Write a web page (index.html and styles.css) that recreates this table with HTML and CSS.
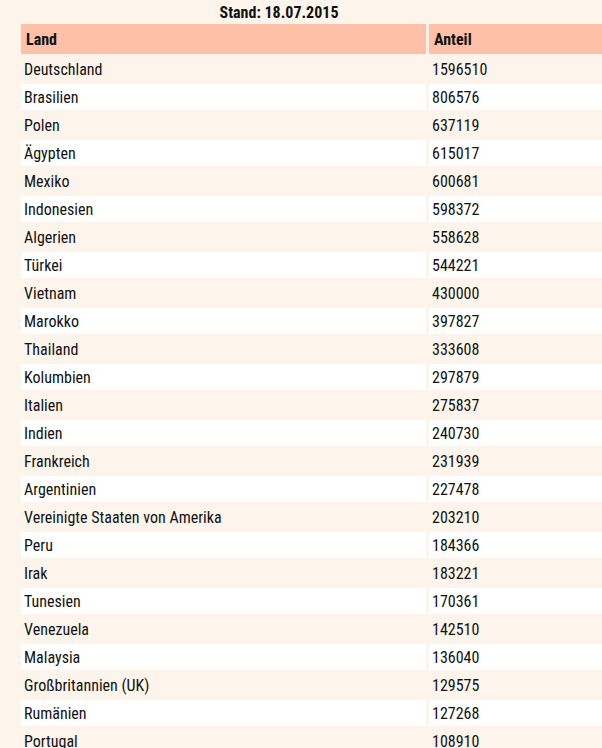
FILE: index.html
```html
<!DOCTYPE html>
<html lang="de">
<head>
<meta charset="utf-8">
<title>Anteil</title>
<link rel="stylesheet" href="styles.css">
</head>
<body>
<div class="stand">Stand: 18.07.2015</div>
<table class="tbl">
<thead>
<tr><th class="c1">Land</th><th>Anteil</th></tr>
</thead>
<tbody>
<tr><td>Deutschland</td><td>1596510</td></tr>
<tr><td>Brasilien</td><td>806576</td></tr>
<tr><td>Polen</td><td>637119</td></tr>
<tr><td>Ägypten</td><td>615017</td></tr>
<tr><td>Mexiko</td><td>600681</td></tr>
<tr><td>Indonesien</td><td>598372</td></tr>
<tr><td>Algerien</td><td>558628</td></tr>
<tr><td>Türkei</td><td>544221</td></tr>
<tr><td>Vietnam</td><td>430000</td></tr>
<tr><td>Marokko</td><td>397827</td></tr>
<tr><td>Thailand</td><td>333608</td></tr>
<tr><td>Kolumbien</td><td>297879</td></tr>
<tr><td>Italien</td><td>275837</td></tr>
<tr><td>Indien</td><td>240730</td></tr>
<tr><td>Frankreich</td><td>231939</td></tr>
<tr><td>Argentinien</td><td>227478</td></tr>
<tr><td>Vereinigte Staaten von Amerika</td><td>203210</td></tr>
<tr><td>Peru</td><td>184366</td></tr>
<tr><td>Irak</td><td>183221</td></tr>
<tr><td>Tunesien</td><td>170361</td></tr>
<tr><td>Venezuela</td><td>142510</td></tr>
<tr><td>Malaysia</td><td>136040</td></tr>
<tr><td>Großbritannien (UK)</td><td>129575</td></tr>
<tr><td>Rumänien</td><td>127268</td></tr>
<tr><td>Portugal</td><td>108910</td></tr>
</tbody>
</table>
</body>
</html>
```
FILE: styles.css
```css
html {
  overflow: hidden;
  background: #fdf5ec;
}
body {
  margin: 0;
  padding: 4px 0 0 18px;
  font-family: "Roboto Condensed", Roboto, "Liberation Sans", sans-serif;
  font-stretch: condensed;
  color: #111;
  font-size: 16px;
}
.stand {
  width: 522px;
  text-align: center;
  font-weight: bold;
  font-size: 16px;
  line-height: 18px;
  height: 18px;
}
.tbl {
  border-collapse: separate;
  border-spacing: 3px 2px;
  width: 587px;
}
.tbl th {
  background: #fec0a6;
  text-align: left;
  font-weight: bold;
  font-size: 16px;
  height: 30px;
  padding: 0 5px;
  box-sizing: border-box;
}
.tbl th.c1 {
  width: 405px;
}
.tbl td {
  height: 26px;
  padding: 0 3px;
  box-sizing: border-box;
  font-size: 16px;
}
.tbl tbody tr:nth-child(even) td {
  background: #ffffff;
}
```
